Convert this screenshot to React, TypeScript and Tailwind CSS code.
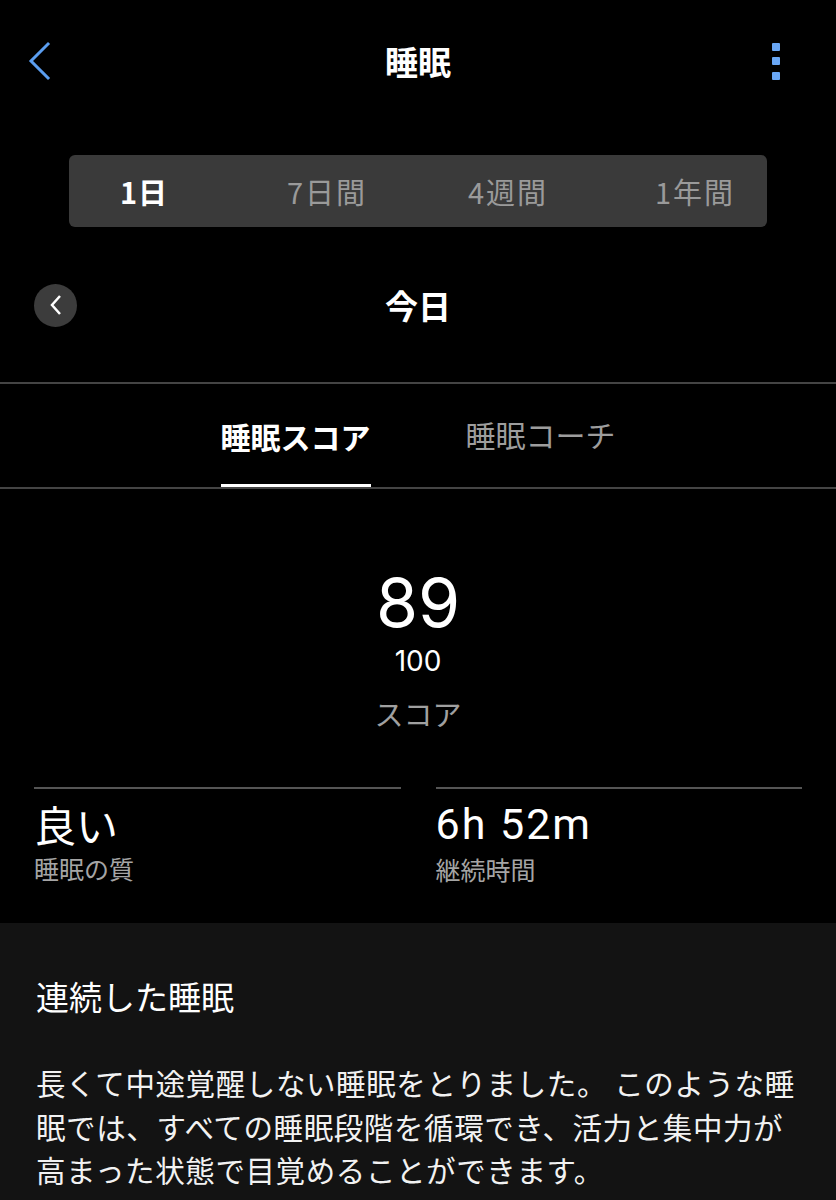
import React from 'react';

const jp = { fontFamily: '"Noto Sans CJK JP", "Noto Sans", sans-serif' };
const num = { fontFamily: 'Inter, "Noto Sans CJK JP", sans-serif' };

const BackIcon = () => (
  <svg width="24" height="40" viewBox="0 0 24 40" fill="none">
    <path d="M20 3 L3 20 L20 37" stroke="#5b9ef0" strokeWidth="3" strokeLinecap="square" />
  </svg>
);

const Kebab = () => (
  <div className="flex flex-col gap-[6.5px]">
    <span className="block h-2 w-2 rounded-[1px] bg-[#69a7f5]" />
    <span className="block h-2 w-2 rounded-[1px] bg-[#69a7f5]" />
    <span className="block h-2 w-2 rounded-[1px] bg-[#69a7f5]" />
  </div>
);

const periods = ['1日', '7日間', '4週間', '1年間'];

const App = () => {
  return (
    <div className="min-h-[1200px] w-[836px] bg-black text-white" style={jp}>
      {/* header */}
      <div className="grid h-[122px] grid-cols-[1fr_auto_1fr] items-center px-[28px]">
        <div className="flex">
          <BackIcon />
        </div>
        <h1 className="text-[33px] font-bold leading-none">睡眠</h1>
        <div className="flex justify-end pr-[28px]">
          <Kebab />
        </div>
      </div>

      {/* period switch */}
      <div className="mx-[69px] mt-[33px] grid h-[72px] grid-cols-[167px_181px_187px_1fr] items-center rounded-[6px] bg-[#3a3a3a] pl-[51px]">
        {periods.map((p, i) => (
          <span
            key={p}
            className={
              i === 0
                ? 'text-[29px] font-bold leading-none tracking-[1px] text-white'
                : 'text-[29px] leading-none tracking-[2px] text-[#9a9a9a]'
            }
          >
            {p}
          </span>
        ))}
      </div>

      {/* date row */}
      <div className="mt-[35px] grid h-[86px] grid-cols-[1fr_auto_1fr] items-center px-[34px]">
        <div className="flex">
          <div className="flex h-[43px] w-[43px] items-center justify-center rounded-full bg-[#3c3c3c]">
            <svg width="12" height="22" viewBox="0 0 12 22" fill="none">
              <path d="M10 2 L2 11 L10 20" stroke="#fff" strokeWidth="2.5" />
            </svg>
          </div>
        </div>
        <h2 className="text-[33px] font-bold leading-none">今日</h2>
        <div />
      </div>

      {/* tabs */}
      <div className="mt-[34px] flex h-[107px] justify-center gap-[95px] border-y-2 border-[#444]">
        <div className="flex items-center border-b-[3px] border-white pt-[3px] text-[30px] font-bold leading-none">
          睡眠スコア
        </div>
        <div className="flex items-center pb-[3px] text-[30px] leading-none text-[#9d9d9d]">睡眠コーチ</div>
      </div>

      {/* score */}
      <div className="flex flex-col items-center">
        <div className="mt-[79px] text-[68px] leading-none" style={num}>89</div>
        <div className="mt-[11px] text-[28px] leading-none" style={num}>100</div>
        <div className="mt-[24px] text-[29px] leading-none text-[#a0a0a0]">スコア</div>
      </div>

      {/* stats */}
      <div className="mt-[59px] grid grid-cols-2 gap-[35px] px-[34px]">
        <div className="border-t-2 border-[#555] pt-[14px]">
          <div className="text-[42px] leading-none">良い</div>
          <div className="mt-[11px] text-[25px] leading-none text-[#a5a5a5]">睡眠の質</div>
        </div>
        <div className="border-t-2 border-[#555] pt-[14px]">
          <div className="text-[43px] leading-none tracking-[2px]" style={{ fontFamily: 'Roboto, sans-serif' }}>6h 52m</div>
          <div className="mt-[11px] text-[25px] leading-none text-[#a5a5a5]">継続時間</div>
        </div>
      </div>

      {/* insight */}
      <div className="mt-[41px] min-h-[278px] bg-[#131313] px-[36px] pt-[57px]">
        <h3 className="text-[33px] leading-none">連続した睡眠</h3>
        <p className="mt-[48px] text-[29.5px] leading-[43.5px] tracking-[0.6px] text-[#f2f2f2]">
          長くて中途覚醒しない睡眠をとりました。 このような睡
          <br />
          眠では、すべての睡眠段階を循環でき、活力と集中力が
          <br />
          高まった状態で目覚めることができます。
        </p>
      </div>
    </div>
  );
};

export default App;
